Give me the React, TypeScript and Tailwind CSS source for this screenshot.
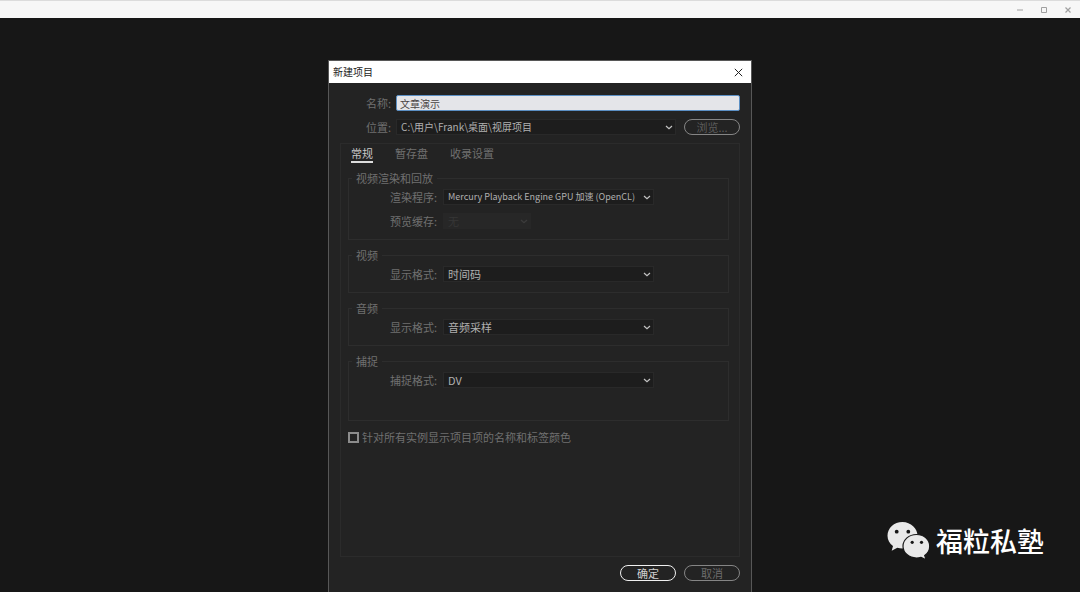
import { useState } from "react";
import type { ReactNode } from "react";
import clsx from "clsx";

const tabs = ["常规", "暂存盘", "收录设置"];

const Chevron = ({ className }: { className?: string }) => (
  <svg viewBox="0 0 8 5" className={clsx("pointer-events-none absolute w-2 h-[5px]", className)} fill="none" stroke="currentColor">
    <path d="M1 1l3 2.7L7 1" strokeWidth="1.2" />
  </svg>
);

type SelectProps = {
  id: string;
  value: string;
  className?: string;
  disabled?: boolean;
};

const Select = ({ id, value, className, disabled }: SelectProps) => (
  <div className={clsx("relative flex items-center", className)}>
    <select
      id={id}
      disabled={disabled}
      className={clsx(
        "appearance-none w-full h-4 pl-1 pr-4 leading-[14px] border outline-none",
        disabled ? "bg-[#272727] border-[#272727] text-[#363636]" : "bg-[#1d1d1d] border-[#292929] text-[#b0b0b0]",
      )}
    >
      <option>{value}</option>
    </select>
    <Chevron className={clsx("right-[3px]", disabled ? "text-[#3c3c3c]" : "text-[#c4c4c4]")} />
  </div>
);

const Group = ({ title, className, children }: { title: string; className?: string; children: ReactNode }) => (
  <fieldset className={clsx("border border-[#2d2d2d] pt-1", className)}>
    <legend className="ml-[3px] px-1 h-[14px] leading-[14px]">{title}</legend>
    <div className="flex flex-col gap-2">{children}</div>
  </fieldset>
);

const Field = ({ label, ...select }: { label: string } & SelectProps) => (
  <div className="flex items-center gap-1.5">
    <label htmlFor={select.id} className="w-[88px] text-right">{label}</label>
    <Select {...select} />
  </div>
);

const WindowBar = () => (
  <header className="flex items-center justify-end gap-4 h-[18px] pr-2 bg-[#f7f7f7] border-t border-[#dcdcdc] text-[#a0a0a0]">
    <button aria-label="最小化" className="w-2 h-2">
      <svg viewBox="0 0 8 8" stroke="currentColor"><path d="M1 4h6" /></svg>
    </button>
    <button aria-label="最大化" className="w-2 h-2">
      <svg viewBox="0 0 8 8" fill="none" stroke="currentColor"><path d="M1.5 1.5h5v5h-5z" /></svg>
    </button>
    <button aria-label="关闭" className="w-2 h-2">
      <svg viewBox="0 0 8 8" stroke="currentColor"><path d="M1.5 1.5l5 5M6.5 1.5l-5 5" strokeWidth="1.2" /></svg>
    </button>
  </header>
);

const Watermark = () => (
  <div className="absolute right-9 bottom-8 flex items-center gap-1.5 text-white">
    <svg viewBox="0 0 43 38" className="w-[43px] h-[38px]">
      <path
        fill="#e9e9e9"
        d="M15.500 0C7 0 .5 6.200.5 13.800c0 4.200 2.100 7.800 5.500 10.300L4.700 28.700l5.600-2.900c1.600.5 3.400.8 5.200.8 8.400 0 15-5.900 15-13S23.900 0 15.500 0z"
      />
      <path
        fill="#e9e9e9"
        stroke="#171717"
        strokeWidth="1.2"
        d="M29.500 12.500c-7.500 0-13.500 5.200-13.500 11.700s6 11.800 13.500 11.800c1.600 0 3.200-.2 4.600-.7l5 2.500-1.400-4.200c3.200-2.100 5-5.500 5-9.300C42.700 17.700 37 12.500 29.500 12.500z"
      />
      <g fill="#171717">
        <circle cx="9.700" cy="9.700" r="1.900" />
        <circle cx="21.300" cy="9.700" r="1.900" />
        <circle cx="25.200" cy="20.300" r="1.600" />
        <circle cx="34.500" cy="20.300" r="1.600" />
      </g>
    </svg>
    <span className="text-[27px] leading-9 font-medium">福粒私塾</span>
  </div>
);

export default function App() {
  const [active, setActive] = useState(tabs[0]);
  const [name, setName] = useState("文章演示");

  return (
    <div className="relative flex flex-col min-h-screen bg-[#171717] text-[11px] leading-4 text-[#707070] font-['Noto_Sans_CJK_SC',sans-serif]">
      <WindowBar />

      <main className="flex flex-1 justify-center pt-[42px] px-4">
        <div role="dialog" aria-labelledby="dialog-title" className="flex flex-col w-full max-w-[424px] bg-[#232323] border border-b-0 border-[#575757]">
          <div className="flex items-center justify-between h-[22px] pl-1 pr-2 bg-white text-[#222]">
            <h1 id="dialog-title" className="text-[10px]">新建项目</h1>
            <button aria-label="关闭" className="w-[9px] h-[9px]">
              <svg viewBox="0 0 9 9" stroke="currentColor"><path d="M.8.8l7.400 7.400M8.200.8L.8 8.200" /></svg>
            </button>
          </div>

          <div className="flex flex-col flex-1 gap-2 px-[11px] pt-3 pb-[11px]">
            <div className="flex items-center gap-[5px]">
              <label htmlFor="name" className="w-[51px] text-right">名称:</label>
              <input
                id="name"
                value={name}
                onChange={(e) => setName(e.target.value)}
                className="flex-1 h-4 px-[3px] text-[10px] leading-[14px] bg-[#e4e5e9] border border-[#5b8fc4] rounded-[2px] text-[#4a4444] outline-none"
              />
            </div>

            <div className="flex items-center gap-[5px]">
              <label htmlFor="location" className="w-[51px] text-right">位置:</label>
              <Select id="location" value="C:\用户\Frank\桌面\视屏项目" className="flex-1 text-[10px]" />
              <button className="ml-[3px] w-14 h-4 leading-3 border border-[#858585] rounded-full text-[#5c5c5c]">浏览...</button>
            </div>

            <section className="flex flex-col flex-1 px-[7px] pt-0.5 border border-[#2b2b2b]">
              <div role="tablist" className="flex gap-[22px] pl-[3px]">
                {tabs.map((tab) => (
                  <button
                    key={tab}
                    role="tab"
                    aria-selected={tab === active}
                    onClick={() => setActive(tab)}
                    className={clsx("leading-[15px] border-b-2", tab === active ? "text-[#c8c8c8] border-[#dcdcdc]" : "border-transparent")}
                  >
                    {tab}
                  </button>
                ))}
              </div>

              <div className="flex flex-col gap-2 mt-2 pr-[3px]">
                <Group title="视频渲染和回放" className="pb-2.5">
                  <Field id="renderer" label="渲染程序:" value="Mercury Playback Engine GPU 加速 (OpenCL)" className="w-[211px] text-[9px]" />
                  <Field id="preview-cache" label="预览缓存:" value="无" className="w-[88px]" disabled />
                </Group>
                <Group title="视频" className="pb-2.5">
                  <Field id="video-format" label="显示格式:" value="时间码" className="w-[211px]" />
                </Group>
                <Group title="音频" className="pb-2.5">
                  <Field id="audio-format" label="显示格式:" value="音频采样" className="w-[211px]" />
                </Group>
                <Group title="捕捉" className="pb-8">
                  <Field id="capture-format" label="捕捉格式:" value="DV" className="w-[211px]" />
                </Group>
              </div>

              <label className="flex items-center gap-[3px] mt-2">
                <input type="checkbox" className="appearance-none w-[11px] h-[11px] border-2 border-[#8c8c8c] checked:bg-[#a8a8a8]" />
                针对所有实例显示项目项的名称和标签颜色
              </label>
            </section>

            <div className="flex justify-end gap-2">
              <button className="w-14 h-4 leading-3 border border-[#f0f0f0] rounded-full text-[#d0d0d0]">确定</button>
              <button className="w-14 h-4 leading-3 border border-[#858585] rounded-full text-[#6c6c6c]">取消</button>
            </div>
          </div>
        </div>
      </main>

      <Watermark />
    </div>
  );
}
